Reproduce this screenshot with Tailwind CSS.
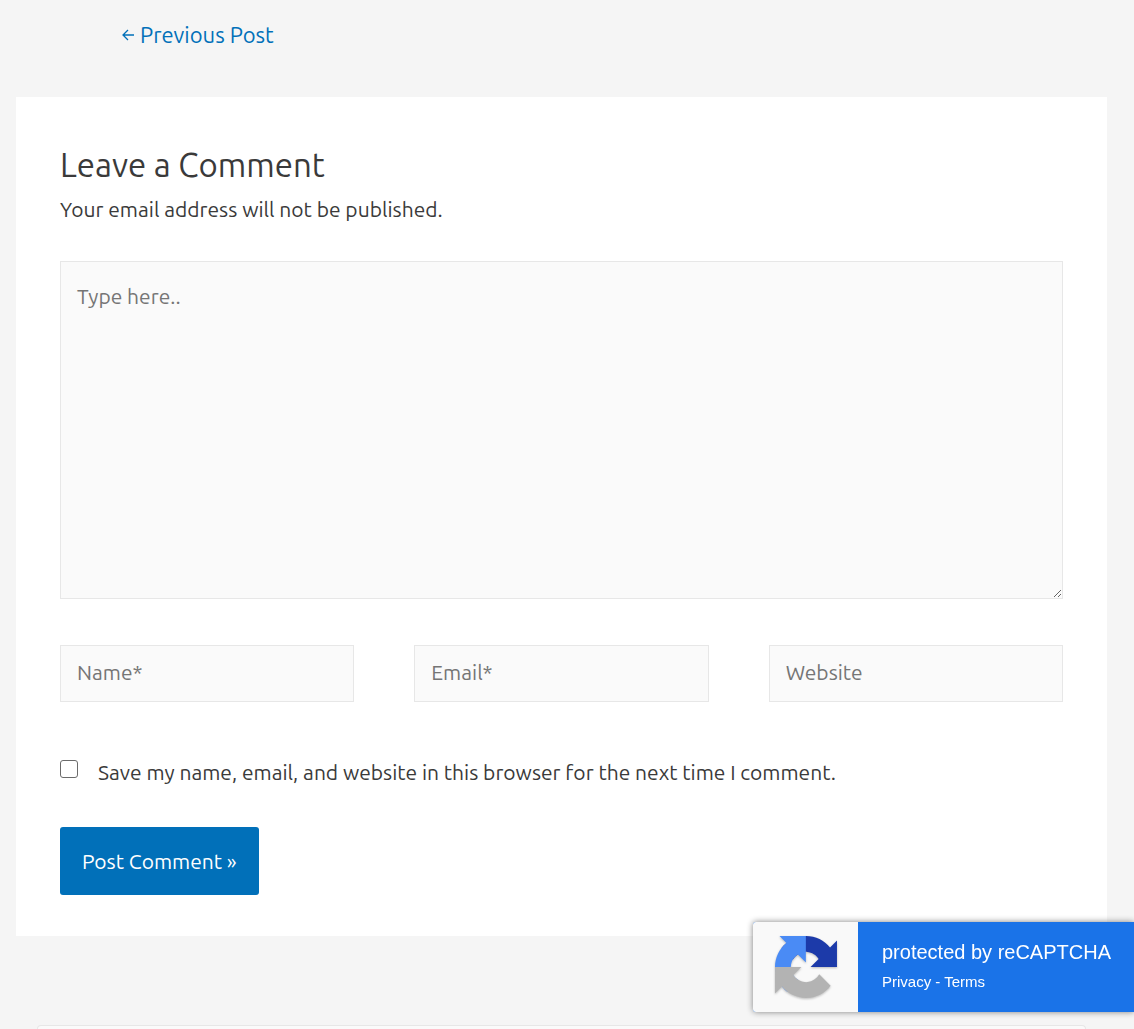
<!DOCTYPE html>
<html lang="en">
<head>
<meta charset="utf-8">
<meta name="viewport" content="width=device-width, initial-scale=1">
<title>Leave a Comment</title>
<script src="https://cdn.jsdelivr.net/npm/@tailwindcss/browser@4"></script>
</head>
<body class="bg-[#f5f5f5] font-['Ubuntu','Noto_Sans',sans-serif] text-[21px] leading-8 text-[#3a3a3a]">
<main class="pl-4 pr-[27px]">
  <nav class="pl-[106px] pt-[17px]" aria-label="Posts">
    <a href="#" class="inline-flex items-center gap-1.5 text-[22px] leading-8 text-[#0170b9]">
      <svg class="h-3 w-3" viewBox="0 0 12 12" fill="none" stroke="currentColor" stroke-width="1.3" aria-hidden="true"><path d="M12 6H1M6 1L1 6l5 5"/></svg>
      Previous Post
    </a>
  </nav>

  <section class="mt-[46px] bg-white px-11 pb-[41px] pt-11">
    <h3 class="text-[33px] leading-12">Leave a Comment</h3>
    <p class="mt-1">Your email address will not be published.</p>
    <form class="mt-9">
      <textarea aria-label="Comment" placeholder="Type here.." class="block h-[338px] w-full resize border border-[#e7e7e7] bg-[#fafafa] p-4 pt-[18px] placeholder:text-[#757575]"></textarea>
      <div class="mt-[46px] grid grid-cols-3 gap-[60px]">
        <input type="text" aria-label="Name" placeholder="Name*" class="h-[57px] w-full min-w-0 border border-[#e7e7e7] bg-[#fafafa] px-4 pb-1 placeholder:text-[#757575]">
        <input type="email" aria-label="Email" placeholder="Email*" class="h-[57px] w-full min-w-0 border border-[#e7e7e7] bg-[#fafafa] px-4 pb-1 placeholder:text-[#757575]">
        <input type="url" aria-label="Website" placeholder="Website" class="h-[57px] w-full min-w-0 border border-[#e7e7e7] bg-[#fafafa] px-4 pb-1 placeholder:text-[#757575]">
      </div>
      <div class="mt-[54px] flex items-start gap-5">
        <input id="consent" type="checkbox" class="mt-1 h-[18px] w-[18px] shrink-0 appearance-none rounded-[3px] border border-[#6b6b6b] bg-white checked:bg-[#0170b9]">
        <label for="consent">Save my name, email, and website in this browser for the next time I comment.</label>
      </div>
      <button type="submit" class="mt-[39px] h-[68px] rounded-[3px] bg-[#0170b9] px-[22px] text-white">Post Comment »</button>
    </form>
  </section>

  <div class="ml-[21px] mr-[21px] mt-[89px] h-1 rounded-t border border-b-0 border-[#e7e7e7] bg-[#fafafa]"></div>
</main>

<aside class="fixed bottom-[17px] right-0 flex h-[90px] w-[381px] overflow-hidden rounded-l-[3px] bg-[#1a73e8] font-['Liberation_Sans',Arial,sans-serif] text-white shadow-[0_0_6px_#808080]">
  <div class="flex w-[105px] items-center justify-center bg-[#f9f9f9]">
    <svg class="h-[62px] w-[62px] drop-shadow-[0_1px_1px_#00000040]" viewBox="0 0 64 64" aria-hidden="true">
      <path fill="#1c3aa9" d="M64 31.955l-.033-1.37V4.687l-7.16 7.16C50.948 4.674 42.033.093 32.05.093c-10.4 0-19.622 4.96-25.458 12.64l11.736 11.86a15.55 15.55 0 0 1 4.754-5.334c2.05-1.6 4.952-2.906 8.968-2.906.485 0 .86.057 1.135.163 4.976.393 9.288 3.14 11.828 7.124l-8.307 8.307L64 31.953"/>
      <path fill="#4a8bf5" d="M31.862.094l-1.37.033H4.594l7.16 7.16C4.58 13.147 0 22.06 0 32.046c0 10.4 4.96 19.622 12.64 25.458L24.5 45.768a15.55 15.55 0 0 1-5.334-4.754c-1.6-2.05-2.906-4.952-2.906-8.968 0-.485.057-.86.163-1.135.393-4.976 3.14-9.288 7.124-11.828l8.307 8.307L31.86.095"/>
      <path fill="#b3b3b3" d="M.001 32.045l.033 1.37v25.898l7.16-7.16c5.86 7.173 14.774 11.754 24.76 11.754 10.4 0 19.622-4.96 25.458-12.64l-11.736-11.86a15.55 15.55 0 0 1-4.754 5.334c-2.05 1.6-4.952 2.906-8.968 2.906-.485 0-.86-.057-1.135-.163-4.976-.393-9.288-3.14-11.828-7.124l8.307-8.307c-10.522.04-22.4.066-27.295-.005"/>
    </svg>
  </div>
  <div class="pl-6 pt-[18px]">
    <p class="text-xl leading-6">protected by reCAPTCHA</p>
    <p class="mt-2 text-[15px] leading-5"><a href="#">Privacy</a> - <a href="#">Terms</a></p>
  </div>
</aside>
</body>
</html>
